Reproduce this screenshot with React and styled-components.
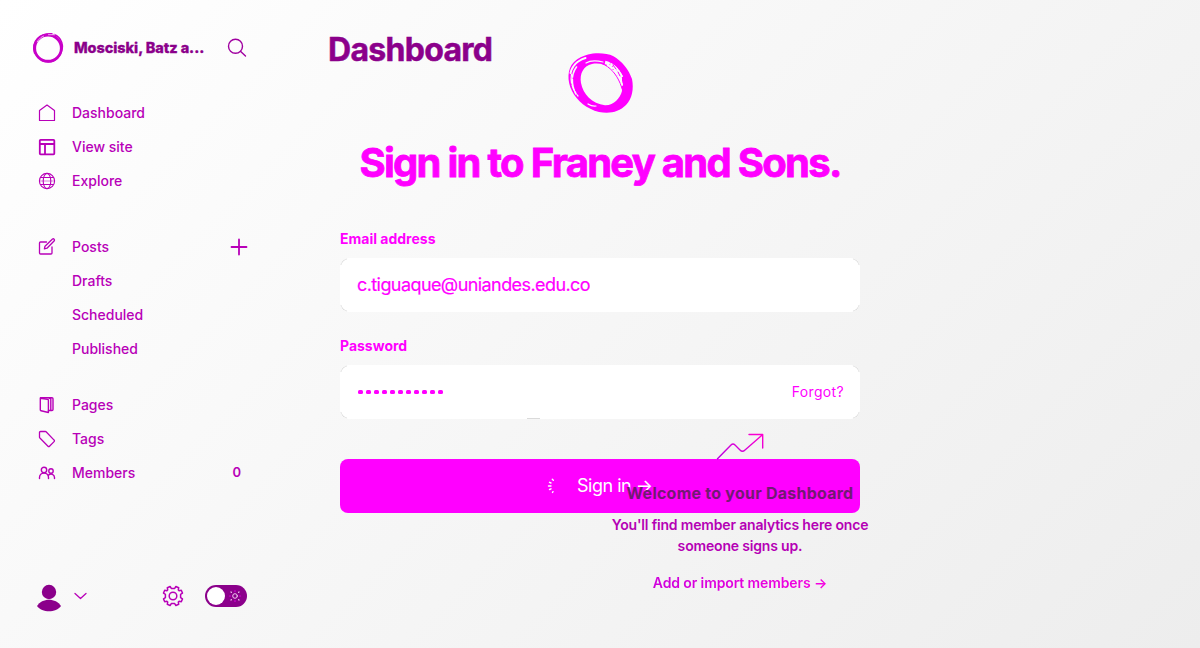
import React from 'react';
import styled, { createGlobalStyle } from 'styled-components';

const Global = createGlobalStyle`
  * { box-sizing: border-box; }
  body { margin: 0; font-family: Inter, sans-serif; }
`;

const Page = styled.div`
  position: relative;
  display: flex;
  width: 1200px;
  height: 648px;
  overflow: hidden;
  background: linear-gradient(135deg, #ffffff 0%, #f7f7f7 45%, #ededed 100%);
`;
const Sidebar = styled.aside`
  width: 280px;
  height: 648px;
  padding: 32px 32px 36px;
  display: flex;
  flex-direction: column;
  color: #b800b8;
`;
const Brand = styled.header`
  display: flex;
  align-items: center;
  height: 32px;
  margin-bottom: 32px;
`;
const BrandName = styled.div`
  flex: 1;
  margin-left: 10px;
  padding-bottom: 1px;
  font-size: 14.5px;
  font-weight: 800;
  letter-spacing: -0.07px;
  color: #8b008b;
  -webkit-text-stroke: 0.3px #8b008b;
  white-space: nowrap;
`;
const NavGroup = styled.nav`
  display: flex;
  flex-direction: column;
  margin-bottom: ${(p) => p.$gap || 0}px;
`;
const NavRow = styled.a`
  display: grid;
  grid-template-columns: 34px 1fr auto;
  align-items: center;
  height: 34px;
  padding: 0 1px 0 6px;
`;
const NavText = styled.span`
  grid-column: 2;
  padding-bottom: 2px;
  font-size: 14px;
  font-weight: 500;
`;
const Count = styled.span`
  padding: 0 6px 2px 0;
  font-size: 13px;
  font-weight: 600;
`;
const Footer = styled.footer`
  display: flex;
  align-items: center;
  height: 32px;
  margin-top: auto;
  padding-left: 3px;
`;
const Spacer = styled.div`
  flex: 1;
`;
const Toggle = styled.div`
  display: flex;
  align-items: center;
  justify-content: space-between;
  width: 42px;
  height: 22px;
  margin: 0 1px 0 21px;
  padding: 0 6px 0 2px;
  border-radius: 11px;
  background: #8b008b;
`;
const Knob = styled.div`
  width: 18px;
  height: 18px;
  border-radius: 50%;
  background: #fff;
`;
const Main = styled.main`
  flex: 1;
  padding: 29px 0 0 48px;
`;
const PageTitle = styled.h1`
  margin: 0;
  font-size: 32px;
  line-height: 41px;
  font-weight: 700;
  letter-spacing: -0.7px;
  color: #8b008b;
  -webkit-text-stroke: 0.5px #8b008b;
`;
const SignIn = styled.section`
  position: absolute;
  left: 340px;
  top: 53px;
  width: 520px;
  display: flex;
  flex-direction: column;
  color: #ff00ff;
`;
const LogoWrap = styled.div`
  display: flex;
  justify-content: center;
  height: 60px;
`;
const SignTitle = styled.h2`
  margin: 25px 0 41px;
  font-size: 40px;
  line-height: 50px;
  font-weight: 700;
  letter-spacing: -1.72px;
  text-align: center;
  white-space: nowrap;
  -webkit-text-stroke: 0.8px #ff00ff;
`;
const Label = styled.label`
  height: 20px;
  margin-bottom: 9px;
  font-size: 14px;
  line-height: 20px;
  font-weight: 700;
`;
const Field = styled.div`
  position: relative;
  display: flex;
  align-items: center;
  justify-content: space-between;
  height: 54px;
  margin-bottom: ${(p) => p.$gap}px;
  padding: 0 16px 2px 17px;
  border-radius: 9px;
  background: #fff;
  font-size: 18px;
  letter-spacing: -0.58px;
  -webkit-text-stroke: 0.2px #ff00ff;

  &::before {
    content: '';
    position: absolute;
    inset: 0;
    border: 1px solid #dadada;
    border-radius: 9px;
    mask:
      linear-gradient(#000 0 0) 0 0 / 7px 7px no-repeat,
      linear-gradient(#000 0 0) 100% 0 / 7px 7px no-repeat,
      linear-gradient(#000 0 0) 0 100% / 7px 7px no-repeat,
      linear-gradient(#000 0 0) 100% 100% / 7px 7px no-repeat
      ${(p) => (p.$dash ? ', linear-gradient(#000 0 0) 187px 100% / 13px 1px no-repeat' : '')};
    mask-origin: border-box;
  }
`;
const Dots = styled.div`
  display: flex;
  gap: 3.5px;
  padding: 2px 0 0 1px;
`;
const Dot = styled.i`
  width: 4.5px;
  height: 4.5px;
  border-radius: 1.5px;
  background: #ff00ff;
`;
const Forgot = styled.a`
  font-size: 14px;
  letter-spacing: 0.35px;
  -webkit-text-stroke: 0;
`;
const Button = styled.div`
  display: flex;
  align-items: center;
  height: 54px;
  padding: 0 0 1px 207px;
  border-radius: 8px;
  background: #ff00ff;
  color: #fff;
  font-size: 18px;
`;
const ButtonText = styled.span`
  margin-left: 16px;
  letter-spacing: -0.48px;
  white-space: nowrap;
`;
const Welcome = styled.section`
  position: absolute;
  left: 600px;
  top: 432px;
  width: 280px;
  display: flex;
  flex-direction: column;
  align-items: center;
  text-align: center;
`;
const TrendSlot = styled.div`
  height: 28px;
`;
const WelcomeTitle = styled.h3`
  margin: 22px 0 9px;
  font-size: 16px;
  line-height: 23px;
  font-weight: 700;
  letter-spacing: 0.24px;
  color: #721a72;
  white-space: nowrap;
`;
const WelcomeText = styled.p`
  margin: 0 0 17px;
  font-size: 14px;
  line-height: 21px;
  font-weight: 600;
  letter-spacing: -0.17px;
  color: #b500b5;
`;
const WelcomeLink = styled.a`
  font-size: 14px;
  line-height: 20px;
  font-weight: 600;
  letter-spacing: -0.12px;
  background: linear-gradient(90deg, #cf00dc, #f500e0);
  background-clip: text;
  color: transparent;
`;

const Icon = styled.svg.attrs({ fill: 'none', strokeLinecap: 'round', strokeLinejoin: 'round' })`
  display: block;
  flex: none;
  overflow: visible;
  stroke: currentColor;
`;
const Chevron = styled(Icon)`
  margin-left: 11px;
`;

const Home = () => (
  <Icon width="18" height="18" viewBox="0 0 18 18" strokeWidth="1.2">
    <path d="M1.500 6.500 9 1l7.500 5.500V16.500h-15Z" />
  </Icon>
);
const Layout = () => (
  <Icon width="18" height="18" viewBox="0 0 18 18" strokeWidth="1.8">
    <rect x="1.800" y="1.800" width="14.500" height="14.500" rx="0.800" />
    <path d="M2 6h14M7 6v10" />
  </Icon>
);
const Globe = () => (
  <Icon width="18" height="18" viewBox="0 0 18 18" strokeWidth="1.1">
    <circle cx="9" cy="9" r="7.600" />
    <ellipse cx="9" cy="9" rx="3.800" ry="7.600" />
    <path d="M2.500 5.500h13M2.500 12.500h13" />
    <path d="M1.500 9h15" opacity=".5" />
  </Icon>
);
const Edit = () => (
  <Icon width="18" height="18" viewBox="0 0 18 18" strokeWidth="1.300">
    <path d="M8.500 4H2.500a1 1 0 0 0-1 1v10a1 1 0 0 0 1 1H13a1 1 0 0 0 1-1V9" />
    <path d="m7 8.200 7.500-7.200a1.300 1.300 0 0 1 1.800 1.800L9 10.200l-2.600.6Z" />
  </Icon>
);
const Plus = () => (
  <Icon width="16" height="16" viewBox="0 0 16 16" strokeWidth="1.800">
    <path d="M8 .5v15M.5 8h15" />
  </Icon>
);
const PagesIcon = () => (
  <Icon width="18" height="18" viewBox="0 0 18 18" strokeWidth="1.400">
    <path d="M2.300 2.200 9.500 3.300a1 1 0 0 1 .9 1v12.200L3.100 14.800a1 1 0 0 1-.8-1Z" />
    <path d="M2.500 1.700H14a1 1 0 0 1 1 1v10.800a1 1 0 0 1-1 1h-3.500M11 2l1.800.8v11.500" />
  </Icon>
);
const Tag = () => (
  <Icon width="18" height="18" viewBox="0 0 18 18" strokeWidth="1.300">
    <path d="M1.500 2.500a1 1 0 0 1 1-1h4.800a1 1 0 0 1 .8.300l8 8.300a1 1 0 0 1 0 1.500l-4.600 4.600a1 1 0 0 1-1.500 0L1.900 8a1 1 0 0 1-.4-.8Z" />
  </Icon>
);
const Members = () => (
  <Icon width="18" height="18" viewBox="0 0 18 18" strokeWidth="1.400">
    <circle cx="6" cy="6" r="2.700" />
    <circle cx="13" cy="7" r="2.200" />
    <path d="M1.500 14.500v-1a4.500 4.500 0 0 1 9 0v1M10.800 10.900a3.500 3.500 0 0 1 5.700 2.600v1" />
  </Icon>
);
const Search = () => (
  <Icon width="20" height="20" viewBox="0 0 20 20" strokeWidth="1.400" color="#a000a0">
    <circle cx="7.500" cy="8.300" r="7" />
    <path d="m12.700 13.400 4.800 4.600" />
  </Icon>
);
const Gear = () => (
  <Icon width="22" height="22" viewBox="0 0 22 22" strokeWidth="1.500">
    <circle cx="11" cy="11" r="3.800" />
    <path d="M9.300 3.400 8.100 1.500 5.300 2.700l.4 2.200-.8.800-2.200-.4L1.500 8.100l1.900 1.200v3.400l-1.900 1.200 1.200 2.800 2.200-.4.800.8-.4 2.200 2.800 1.200 1.200-1.900h3.400l1.200 1.900 2.800-1.200-.4-2.200.8-.8 2.200.4 1.200-2.800-1.900-1.200V9.300l1.900-1.200-1.200-2.800-2.200.4-.8-.8.400-2.200-2.800-1.200-1.200 1.900Z" />
  </Icon>
);
const Sun = () => (
  <Icon width="12" height="12" viewBox="0 0 12 12" strokeWidth="1.2">
    <circle cx="6" cy="6" r="2.300" stroke="#f3c8f3" strokeWidth="1" />
    <path d="M6 .5v1M6 10.500v1M.5 6h1M10.500 6h1" stroke="#d400d4" />
    <path d="m2 2 .4.400M9.600 9.600l.4.400M2 10l.4-.4M9.600 2.400l.4-.4" stroke="#f3c8f3" />
  </Icon>
);
const Avatar = () => (
  <Icon width="28" height="28" viewBox="0 -2 28 28">
    <g fill="#8b008b" stroke="none">
      <circle cx="14" cy="8" r="7.200" />
      <path d="M2 22c5-8.500 19-8.500 24 0-5 7-19 7-24 0Z" />
    </g>
  </Icon>
);
const RingSmall = () => (
  <Icon width="32" height="32" viewBox="0 0 32 32" color="#c800c8">
    <ellipse cx="16" cy="16.200" rx="13.300" ry="13" strokeWidth="2.800" />
    <path d="M2.500 21C-1 9 8 1 20 1.800M4.500 23c5 9 18 9.500 23 .5 6-9 2-18.500-5.500-21" strokeWidth="1.400" />
    <path d="M5.200 9.800c2-3.200 4.300-5 6.300-5.700M16.500 2.700h6" stroke="#f3c2f3" strokeWidth=".9" />
  </Icon>
);
const RingLarge = () => (
  <Icon width="65" height="60" viewBox="0 0 65 60">
    <path fill="currentColor" stroke="none" fillRule="evenodd" d="M20 1.500C27-.6 39-.3 45 3c9 5 16 14 19 23 2 10 0 20-6 26-7 7-16 9-27 7C19 56 9 48 4 38-1 28-1 16 6 9c4-4 9-6 14-7.500ZM24 11C15 13 11.500 21 13 30c2 11 11 21 24 22.200 9 .3 15-7 17-14.200C54 27 49 19 43 15.500 37 11 30 9.700 24 11Z" />
    <g stroke="#fafafa">
      <path d="M17.500 5C10 7 4 13 2.500 20" strokeWidth="2" strokeDasharray="8 1 5 1" />
      <path d="M8.500 14C3 21 3 32 8 41" strokeWidth="1.600" strokeDasharray="7 1 3 2" />
      <path d="M3.500 21C2 30 5 37 10 43" strokeWidth="1.200" strokeDasharray="9 2" />
      <path d="M18 10C22 7.500 29 7.500 35 9M20 51q4 2.500 8 2" strokeWidth="1.200" />
      <path d="M37 9.500C44 11 49 16 54 25" strokeWidth="3.500" strokeDasharray="5 1 2 1" strokeLinecap="butt" />
      <path d="M43 11c5 3 8 7 10.500 12M48 18c3 4 5 9 6 14M53 25v7" strokeWidth="2" strokeDasharray="4 1" />
      <path d="M39 12c7 4 12 10 14.500 20" strokeWidth="3" strokeDasharray="7 1" strokeLinecap="butt" />
    </g>
    <path d="M34 10.500c9 4 16 12 20 25M45 12l3 4M50 19l2 4" strokeWidth="1" strokeDasharray="6 1" />
  </Icon>
);
const Spinner = () => (
  <Icon width="14" height="18" viewBox="0 0 14 18" strokeWidth="1.400">
    <path d="m5.300 2.300 1 1M2.500 5.300l1.500.7M1.500 9h2.500M2.500 12.500l1.500-.7M5.500 15.500l.5-.8" />
  </Icon>
);
const Trend = () => (
  <Icon width="48" height="28" viewBox="0 0 48 28" strokeWidth="1.400">
    <defs>
      <linearGradient id="trend" x1="0" y1="1" x2="1" y2="0">
        <stop stopColor="#b500e0" />
        <stop offset="1" stopColor="#ff00d0" />
      </linearGradient>
    </defs>
    <path stroke="url(#trend)" d="M1.500 26.800 15 13q2-2 4 0l5 5q2.500 2.500 5 0L46.500 2.700M33 2.500h13.700v13.500" />
  </Icon>
);

const Item = ({ icon, label, children }) => (
  <NavRow>
    {icon}
    <NavText>{label}</NavText>
    {children}
  </NavRow>
);

export default function App() {
  return (
    <>
      <Global />
      <Page>
        <Sidebar>
          <Brand>
            <RingSmall />
            <BrandName>Mosciski, Batz a...</BrandName>
            <Search />
          </Brand>
          <NavGroup $gap={32}>
            <Item icon={<Home />} label="Dashboard" />
            <Item icon={<Layout />} label="View site" />
            <Item icon={<Globe />} label="Explore" />
          </NavGroup>
          <NavGroup $gap={22}>
            <Item icon={<Edit />} label="Posts"><Plus /></Item>
            <Item label="Drafts" />
            <Item label="Scheduled" />
            <Item label="Published" />
          </NavGroup>
          <NavGroup>
            <Item icon={<PagesIcon />} label="Pages" />
            <Item icon={<Tag />} label="Tags" />
            <Item icon={<Members />} label="Members"><Count>0</Count></Item>
          </NavGroup>
          <Footer>
            <Avatar />
            <Chevron width="13" height="8" viewBox="0 0 13 8" strokeWidth="1.3">
              <path d="m1 1.500 5.500 5 5.500-5" />
            </Chevron>
            <Spacer />
            <Gear />
            <Toggle>
              <Knob />
              <Sun />
            </Toggle>
          </Footer>
        </Sidebar>
        <Main>
          <PageTitle>Dashboard</PageTitle>
        </Main>
        <SignIn>
          <LogoWrap><RingLarge /></LogoWrap>
          <SignTitle>Sign in to Franey and Sons.</SignTitle>
          <Label>Email address</Label>
          <Field $gap={24}>c.tiguaque@uniandes.edu.co</Field>
          <Label>Password</Label>
          <Field $gap={40} $dash>
            <Dots>{Array.from({ length: 11 }, (_, i) => <Dot key={i} />)}</Dots>
            <Forgot>Forgot?</Forgot>
          </Field>
          <Button>
            <Spinner />
            <ButtonText>Sign in →</ButtonText>
          </Button>
        </SignIn>
        <Welcome>
          <TrendSlot><Trend /></TrendSlot>
          <WelcomeTitle>Welcome to your Dashboard</WelcomeTitle>
          <WelcomeText>You'll find member analytics here once someone signs up.</WelcomeText>
          <WelcomeLink>Add or import members →</WelcomeLink>
        </Welcome>
      </Page>
    </>
  );
}
